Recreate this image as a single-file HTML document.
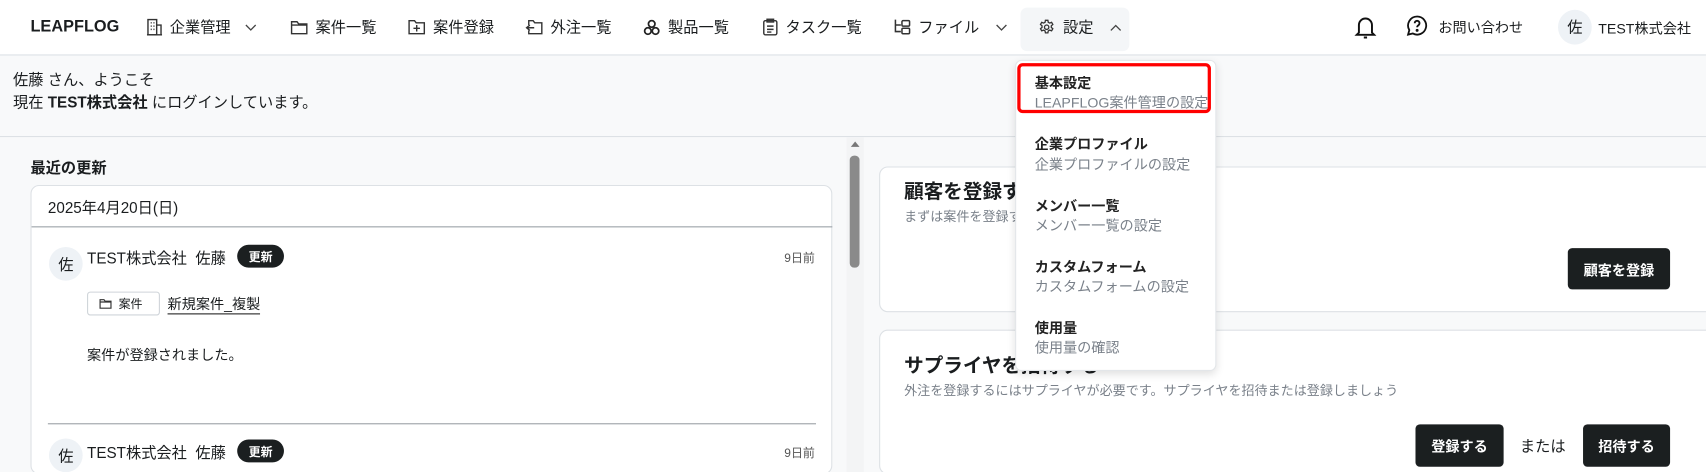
<!DOCTYPE html>
<html style="width:1706px;height:472px;overflow:hidden"><head><meta charset="utf-8"><style>
*{box-sizing:border-box;margin:0;padding:0}
body{width:1706px;height:472px;overflow:hidden;background:#f8f9fa;font-family:"Liberation Sans","Noto Sans CJK JP",sans-serif;color:#1a1d1f;font-size:13px;position:relative}
#w{position:absolute;left:0;top:0;width:1568px;height:434px;overflow:hidden;transform:scale(1.088);transform-origin:0 0}
.a{position:absolute;white-space:nowrap}
nav{position:absolute;left:0;top:0;width:1568px;height:51px;background:#fff;border-bottom:1px solid #dde1e5}
.ni{position:absolute;top:15px;font-size:14px;display:flex;align-items:center;gap:7px;height:20px}
svg{display:block}
.card{position:absolute;background:#fff;border:1px solid #dde1e5;border-radius:8px}
.btn{position:absolute;background:#1b1f20;color:#fff;font-size:13px;font-weight:bold;border-radius:4px;display:flex;align-items:center;justify-content:center}
.av{position:absolute;width:31px;height:31px;border-radius:50%;background:#eef2f6;display:flex;align-items:center;justify-content:center;font-size:14px}
.badge{position:absolute;background:#1b1f20;color:#fff;font-size:11px;font-weight:bold;border-radius:11px;width:43px;height:21px;display:flex;align-items:center;justify-content:center}
.dd .t{position:absolute;left:17px;font-size:13px;font-weight:bold;color:#222}
.dd .s{position:absolute;left:17px;font-size:13px;color:#7a818a}
</style></head><body><div id="w">
<nav>
<div class="a" style="left:28px;top:16px;font-size:15px;font-weight:bold">LEAPFLOG</div>
<div class="ni" style="left:135px"><svg width="14" height="16" viewBox="0 0 14 16" fill="none" stroke="#333" stroke-width="1.3"><rect x="1" y="1" width="8" height="14"/><path d="M9 6h4v9H9M3.5 4h1M6 4h1M3.5 7h1M6 7h1M3.5 10h1M6 10h1M0 15h14"/></svg>企業管理<svg style="margin-left:6px" width="11" height="7" viewBox="0 0 11 7" fill="none" stroke="#444" stroke-width="1.2"><path d="M1 1l4.5 4.5L10 1"/></svg></div>
<div class="ni" style="left:267px"><svg width="16" height="14" viewBox="0 0 16 14" fill="none" stroke="#333" stroke-width="1.3"><path d="M1 2h5l1.5 2H15v9H1z M1 5h14"/></svg>案件一覧</div>
<div class="ni" style="left:375px"><svg width="16" height="14" viewBox="0 0 16 14" fill="none" stroke="#333" stroke-width="1.3"><path d="M1 1h5l1.5 2H15v10H1z M8 5v6M5 8h6"/></svg>案件登録</div>
<div class="ni" style="left:483px"><svg width="16" height="14" viewBox="0 0 16 14" fill="none" stroke="#333" stroke-width="1.3"><path d="M3 5V1h4l1.5 2H15v10H3V10M1 7.5h7M4 5l-3 2.5 3 2.5"/></svg>外注一覧</div>
<div class="ni" style="left:591px"><svg width="16" height="15" viewBox="0 0 16 15" fill="none" stroke="#222" stroke-width="1.6"><circle cx="8" cy="4" r="3"/><circle cx="4.5" cy="10.5" r="3"/><circle cx="11.5" cy="10.5" r="3"/></svg>製品一覧</div>
<div class="ni" style="left:701px"><svg width="14" height="16" viewBox="0 0 14 16" fill="none" stroke="#333" stroke-width="1.3"><rect x="1" y="2" width="12" height="13" rx="1.5"/><rect x="4" y="0.7" width="6" height="2.5"/><path d="M4 7h6M4 10h6M4 12.5h4"/></svg>タスク一覧</div>
<div class="ni" style="left:821px"><svg width="16" height="16" viewBox="0 0 16 16" fill="none" stroke="#333" stroke-width="1.4"><path d="M2 1v11h5M2 6h5"/><rect x="8" y="2" width="7" height="5" rx="1"/><rect x="8" y="9" width="7" height="5" rx="1"/></svg>ファイル<svg style="margin-left:8px" width="11" height="7" viewBox="0 0 11 7" fill="none" stroke="#444" stroke-width="1.2"><path d="M1 1l4.5 4.5L10 1"/></svg></div>
<div class="a" style="left:938px;top:7px;width:100px;height:40px;background:#f4f6f8;border-radius:6px"></div>
<div class="ni" style="left:954px"><svg width="16" height="16" viewBox="0 0 24 24" fill="none" stroke="#333" stroke-width="1.8"><path d="M10.3 2.5h3.4l.5 2.7 2 1.1 2.6-1 1.7 2.9-2.1 1.8v2.3l2.1 1.8-1.7 2.9-2.6-1-2 1.1-.5 2.7h-3.4l-.5-2.7-2-1.1-2.6 1-1.7-2.9 2.1-1.8V10L3.5 8.2l1.7-2.9 2.6 1 2-1.1z"/><circle cx="12" cy="12" r="3"/></svg>設定<svg style="margin-left:8px" width="11" height="7" viewBox="0 0 11 7" fill="none" stroke="#444" stroke-width="1.2"><path d="M1 6l4.5-4.5L10 6"/></svg></div>
<svg class="a" style="left:1245px;top:13px" width="20" height="24" viewBox="0 0 20 24" fill="none" stroke="#111" stroke-width="1.8"><path d="M4 17V10a6 6 0 0112 0v7l2 2H2z"/><path d="M8.5 21.5h3"/></svg>
<svg class="a" style="left:1292px;top:13px" width="21" height="21" viewBox="0 0 24 24" fill="none" stroke="#111" stroke-width="1.9"><path d="M12 2.5a9.5 9.5 0 11-4.6 17.8L2.5 21.5l1.3-4.7A9.5 9.5 0 0112 2.5z"/><path d="M9.5 9.5a2.5 2.5 0 114 2c-1 .7-1.5 1.1-1.5 2.3"/><circle cx="12" cy="17" r=".6" fill="#111"/></svg>
<div class="a" style="left:1322px;top:15px;font-size:13px">お問い合わせ</div>
<div class="av" style="left:1432px;top:9px;width:31px;height:32px">佐</div>
<div class="a" style="left:1469px;top:16px;font-size:13px">TEST株式会社</div>
</nav>
<div class="a" style="left:12px;top:63px;font-size:14px;line-height:21px">佐藤 さん、ようこそ<br>現在 <b>TEST株式会社</b> にログインしています。</div>
<div class="a" style="left:0;top:125px;width:1568px;height:1px;background:#dde1e5"></div>
<div class="a" style="left:28px;top:144px;font-size:14px;font-weight:bold">最近の更新</div>
<div class="card" style="left:28px;top:170px;width:737px;height:266px">
<div class="a" style="left:15px;top:10px;font-size:14px">2025年4月20日(日)</div>
<div class="a" style="left:0;top:37px;width:736px;height:1px;background:#9aa0a6"></div>
<div class="av" style="left:16px;top:56px">佐</div>
<div class="a" style="left:51px;top:56px;font-size:14px">TEST株式会社&nbsp;&nbsp;佐藤</div>
<div class="badge" style="left:189px;top:54px">更新</div>
<div class="a" style="right:15px;top:58px;font-size:11px;color:#555">9日前</div>
<div class="a" style="left:51px;top:97px;width:67px;height:22px;border:1.5px solid #cfd4d9;border-radius:3px;font-size:11px;display:flex;align-items:center;padding-left:10px;gap:6px"><svg width="12" height="10" viewBox="0 0 16 14" fill="none" stroke="#333" stroke-width="1.5"><path d="M1 2h5l1.5 2H15v9H1z M1 5h14"/></svg>案件</div>
<div class="a" style="left:125px;top:100px;font-size:13px;border-bottom:1px solid #222;line-height:17px">新規案件_複製</div>
<div class="a" style="left:51px;top:145px;font-size:13px">案件が登録されました。</div>
<div class="a" style="left:15px;top:218px;width:706px;height:1px;background:#9aa0a6"></div>
<div class="av" style="left:16px;top:232px">佐</div>
<div class="a" style="left:51px;top:235px;font-size:14px">TEST株式会社&nbsp;&nbsp;佐藤</div>
<div class="badge" style="left:189px;top:233px">更新</div>
<div class="a" style="right:15px;top:237px;font-size:11px;color:#555">9日前</div>
</div>
<div class="a" style="left:778px;top:126px;width:16px;height:308px;background:#f3f4f5"></div>
<div class="a" style="left:782px;top:130px;width:0;height:0;border-left:4px solid transparent;border-right:4px solid transparent;border-bottom:5px solid #777"></div>
<div class="a" style="left:781px;top:143px;width:9px;height:103px;background:#8a8a8a;border-radius:4px"></div>
<div class="card" style="left:808px;top:153px;width:775px;height:134px">
<div class="a" style="left:22px;top:8px;font-size:18px;font-weight:bold">顧客を登録する</div>
<div class="a" style="left:22px;top:36px;font-size:12px;color:#7a818a">まずは案件を登録する顧客を登録しましょう</div>
</div>
<div class="btn" style="left:1441px;top:228px;width:94px;height:38px">顧客を登録</div>
<div class="card" style="left:808px;top:303px;width:775px;height:133px">
<div class="a" style="left:22px;top:18px;font-size:18px;font-weight:bold">サプライヤを招待する</div>
<div class="a" style="left:22px;top:46px;font-size:12px;color:#7a818a">外注を登録するにはサプライヤが必要です。サプライヤを招待または登録しましょう</div>
</div>
<div class="btn" style="left:1301px;top:390px;width:81px;height:39px">登録する</div>
<div class="a" style="left:1397px;top:400px;font-size:14px">または</div>
<div class="btn" style="left:1455px;top:390px;width:80px;height:39px">招待する</div>
<div class="a dd" style="left:933px;top:55px;width:185px;height:286px;background:#fff;border:1px solid #e3e6e9;border-radius:6px;box-shadow:0 3px 8px rgba(0,0,0,.12)">
<div class="a" style="left:1px;top:2px;width:178px;height:46px;border:3px solid #f00;border-radius:5px"></div>
<div class="t" style="top:10px">基本設定</div><div class="s" style="top:28px">LEAPFLOG案件管理の設定</div>
<div class="t" style="top:66px">企業プロファイル</div><div class="s" style="top:85px">企業プロファイルの設定</div>
<div class="t" style="top:123px">メンバー一覧</div><div class="s" style="top:141px">メンバー一覧の設定</div>
<div class="t" style="top:179px">カスタムフォーム</div><div class="s" style="top:197px">カスタムフォームの設定</div>
<div class="t" style="top:235px">使用量</div><div class="s" style="top:253px">使用量の確認</div>
</div>
</div></body></html>
